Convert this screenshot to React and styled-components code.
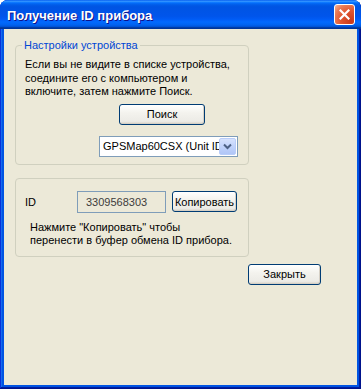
import React from 'react';
import styled, { createGlobalStyle } from 'styled-components';

const GlobalStyle = createGlobalStyle`
  html, body {
    margin: 0;
    padding: 0;
    background: #ffffff;
  }
  body {
    font-family: "Liberation Sans", Arial, sans-serif;
    font-size: 11px;
    color: #000;
  }
`;

const Window = styled.div`
  width: 361px;
  height: 389px;
  box-sizing: border-box;
  display: flex;
  flex-direction: column;
  padding: 0 4px 4px;
  background: #0054e3;
  border-radius: 8px 8px 0 0;
  box-shadow: inset -1px -1px #00138c, inset 1px 0 #0831d9, inset -2px -2px #001ea0, inset 2px 0 #166aee;
`;

const TitleBar = styled.div`
  height: 29px;
  margin: 0 -4px;
  padding: 0 6px 0 7px;
  display: flex;
  align-items: center;
  justify-content: space-between;
  border-radius: 8px 8px 0 0;
  background: linear-gradient(180deg, #0058ee 0%, #3593ff 4%, #288eff 6%, #127dff 8%, #036ffc 10%, #0262ee 14%, #0057e5 20%, #0054e3 24%, #0055eb 56%, #005bf5 66%, #026afe 76%, #0062ef 86%, #0052d6 92%, #0040ab 94%, #003092 100%);
`;

const Title = styled.span`
  color: #fff;
  font-family: "Liberation Sans", Arial, sans-serif;
  font-weight: bold;
  font-size: 13px;
  text-shadow: 1px 1px #0f1089;
  padding-top: 1px;
`;

const CloseButton = styled.button`
  width: 21px;
  height: 21px;
  padding: 0;
  display: flex;
  align-items: center;
  justify-content: center;
  border: 1px solid #fff;
  border-radius: 3px;
  background: radial-gradient(circle at 85% 85%, #c8391a 0%, #e0552f 45%, #ea7c56 75%, #f6b49a 100%);
`;

const Client = styled.div`
  flex: 1;
  background: #ece9d8;
  display: flex;
  flex-direction: column;
  padding: 0 11px;
`;

const Group = styled.fieldset`
  margin: ${p => p.$top}px 0 0;
  width: 234px;
  box-sizing: border-box;
  border: 1px solid #d0d0bf;
  border-radius: 4px;
  padding: ${p => p.$pad};
  min-width: 0;
`;

const Legend = styled.legend`
  color: #0046d5;
  line-height: 14px;
  padding: 0 2px;
  margin-left: -3px;
`;

const Paragraph = styled.p`
  margin: ${p => p.$margin || 0};
  line-height: 13.5px;
`;

const XpButton = styled.button`
  display: block;
  font-family: "Liberation Sans", Arial, sans-serif;
  font-size: 11px;
  color: #000;
  width: ${p => p.$w}px;
  height: 21px;
  margin: ${p => p.$margin || 0};
  padding: 0;
  box-sizing: border-box;
  border: 1px solid #003c74;
  border-radius: 3px;
  background: linear-gradient(180deg, #ffffff 0%, #f4f3ee 40%, #ecebe6 86%, #d6d0c5 100%);
  box-shadow: inset -1px -1px #d6d0c5;
`;

const Select = styled.div`
  width: 139px;
  height: 21px;
  margin: 11px 0 0 74px;
  box-sizing: border-box;
  border: 1px solid #7f9db9;
  background: #fff;
  display: flex;
  align-items: center;
  padding: 1px 1px 1px 3px;
`;

const SelectValue = styled.span`
  flex: 1;
  overflow: hidden;
  white-space: nowrap;
  line-height: 17px;
`;

const DropArrow = styled.span`
  width: 17px;
  height: 17px;
  flex: none;
  box-sizing: border-box;
  border: 1px solid #b9cdf9;
  border-radius: 2px;
  background: linear-gradient(180deg, #d6e2fd 0%, #c1d3fb 50%, #b0c6f7 100%);
  display: flex;
  align-items: center;
  justify-content: center;
`;

const Row = styled.div`
  display: flex;
  align-items: center;
  height: 22px;
`;

const Label = styled.span`
  width: 52px;
`;

const ReadOnlyField = styled.div`
  width: 89px;
  height: 22px;
  box-sizing: border-box;
  border: 1px solid #7f9db9;
  background: #ece9d8;
  color: #3c3c3c;
  padding-left: 8px;
  display: flex;
  align-items: center;
  margin-right: 6px;
`;

const Footer = styled.div`
  display: flex;
  justify-content: flex-end;
  padding-right: 25px;
  margin-top: 7px;
`;

export default function App() {
  return (
    <>
      <GlobalStyle />
      <Window>
        <TitleBar>
          <Title>Получение ID прибора</Title>
          <CloseButton aria-label="close">
            <svg width="11" height="11" viewBox="0 0 11 11">
              <path d="M1.5 1.5 L9.5 9.5 M9.5 1.5 L1.5 9.5" stroke="#fff" strokeWidth="2.2" strokeLinecap="square" />
            </svg>
          </CloseButton>
        </TitleBar>
        <Client>
          <Group $top={9} $pad="6px 9px 7px">
            <Legend>Настройки устройства</Legend>
            <Paragraph>
              Если вы не видите в списке устройства,<br />
              соедините его с компьютером и<br />
              включите, затем нажмите Поиск.
            </Paragraph>
            <XpButton $w={86} $margin="5px 0 0 94px">Поиск</XpButton>
            <Select>
              <SelectValue>GPSMap60CSX (Unit ID 3309568303)</SelectValue>
              <DropArrow>
                <svg width="9" height="7" viewBox="0 0 9 7">
                  <path d="M1 1.5 L4.5 5 L8 1.5" fill="none" stroke="#4d6185" strokeWidth="2" />
                </svg>
              </DropArrow>
            </Select>
          </Group>
          <Group $top={13} $pad="12px 9px 8px">
            <Row>
              <Label>ID</Label>
              <ReadOnlyField>3309568303</ReadOnlyField>
              <XpButton $w={65}>Копировать</XpButton>
            </Row>
            <Paragraph $margin="8px 0 0 5px">
              Нажмите "Копировать" чтобы<br />
              перенести в буфер обмена ID прибора.
            </Paragraph>
          </Group>
          <Footer>
            <XpButton $w={73}>Закрыть</XpButton>
          </Footer>
        </Client>
      </Window>
    </>
  );
}
